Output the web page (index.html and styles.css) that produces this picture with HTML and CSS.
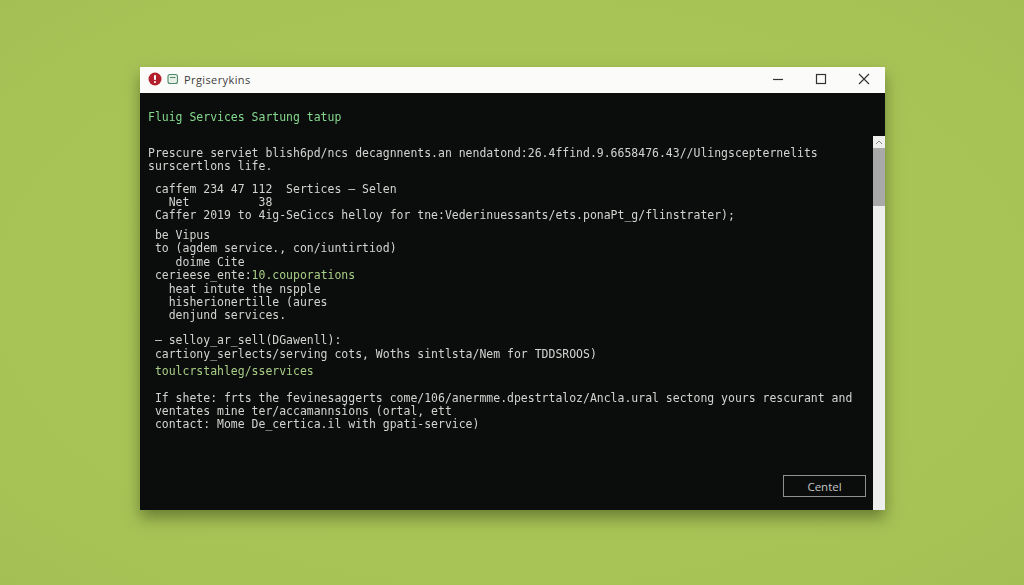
FILE: index.html
```html
<!DOCTYPE html>
<html lang="en">
<head>
<meta charset="utf-8">
<title>Prgiserykins</title>
<link rel="stylesheet" href="styles.css">
</head>
<body>
<main class="window">
  <header class="titlebar">
    <div class="title-group">
      <svg class="app-alert" viewBox="0 0 14 14" width="14" height="14" aria-hidden="true">
        <circle cx="7" cy="7" r="6.5" fill="#b3202c"/>
        <rect x="6" y="3" width="2" height="5" rx=".8" fill="#fff"/>
        <circle cx="7" cy="10" r="1.1" fill="#fff"/>
      </svg>
      <svg class="app-icon" viewBox="0 0 12 12" width="12" height="12" aria-hidden="true">
        <rect x="1" y="1.5" width="9.5" height="9" rx="2" fill="#e6f0e6" stroke="#4f8a68" stroke-width="1.1"/>
        <path d="M3 4.5h5.5" stroke="#4f8a68" stroke-width="1"/>
      </svg>
      <span class="title-text">Prgiserykins</span>
    </div>
    <div class="controls">
      <svg viewBox="0 0 12 12" width="12" height="12" aria-hidden="true"><path d="M1 6.5h10" stroke="#333" stroke-width="1.2"/></svg>
      <svg viewBox="0 0 12 12" width="12" height="12" aria-hidden="true"><rect x="1.5" y="1.5" width="9" height="9" fill="none" stroke="#333" stroke-width="1.2"/></svg>
      <svg viewBox="0 0 12 12" width="12" height="12" aria-hidden="true"><path d="M1 1l10 10M11 1L1 11" stroke="#333" stroke-width="1.2"/></svg>
    </div>
  </header>
  <div class="client">
    <section class="terminal">
      <div class="lines heading">Fluig Services Sartung tatup</div>
      <div class="lines block-a">Prescure serviet blish6pd/ncs decagnnents.an nendatond:26.4ffind.9.6658476.43//Ulingscepternelits
surscertlons life.</div>
      <div class="lines block-b"> caffem 234 47 112  Sertices – Selen
   Net          38
 Caffer 2019 to 4ig-SeCiccs helloy for tne:Vederinuessants/ets.ponaPt_g/flinstrater);</div>
      <div class="lines block-c"> be Vipus
 to (agdem service., con/iuntirtiod)
    doime Cite
 cerieese_ente:<span class="accent">10.couporations</span>
   heat intute the nspple
   hisherionertille (aures
   denjund services.</div>
      <div class="lines block-d"> – selloy_ar_sell(DGawenll):
 cartiony_serlects/serving cots, Woths sintlsta/Nem for TDDSROOS)</div>
      <div class="lines block-e accent"> toulcrstahleg/sservices</div>
      <div class="lines block-f"> If shete: frts the fevinesaggerts come/106/anermme.dpestrtaloz/Ancla.ural sectong yours rescurant and
 ventates mine ter/accamannsions (ortal, ett
 contact: Mome De_certica.il with gpati-service)</div>
      <div class="actions"><button class="cancel" type="button">Centel</button></div>
    </section>
    <aside class="scrollbar">
      <div class="arrow"><svg viewBox="0 0 8 5" width="8" height="5" aria-hidden="true"><path d="M1 4l3-3 3 3" fill="none" stroke="#8a8a8a" stroke-width="1"/></svg></div>
      <div class="thumb"></div>
    </aside>
  </div>
</main>
</body>
</html>
```
FILE: styles.css
```css
* { box-sizing: border-box; }
html, body { height: 100%; }
body {
  margin: 0;
  padding: 67px 139px 75px 140px;
  overflow: hidden;
  background: radial-gradient(ellipse at 50% 50%, #a8c556 0%, #a8c457 70%, #a4c054 100%);
}
.window {
  height: 443px;
  display: flex;
  flex-direction: column;
  box-shadow: 0 8px 14px rgba(50, 60, 20, .5);
}
.titlebar {
  height: 26px;
  flex: none;
  display: flex;
  align-items: center;
  justify-content: space-between;
  padding-bottom: 2px;
  background: #fbfbf9;
}
.title-group { display: flex; align-items: center; padding-left: 8px; }
.app-icon { margin-left: 5px; }
.title-text {
  margin-left: 5px;
  font: 11px "Open Sans", "Liberation Sans", sans-serif;
  letter-spacing: .4px;
  color: #3c3c3c;
}
.controls { display: flex; gap: 31px; padding-right: 15px; }
.client { flex: 1; display: flex; min-height: 0; background: #0b0c0c; }
.terminal {
  flex: 1;
  display: flex;
  flex-direction: column;
  padding: 18px 7px 13px 8px;
  min-width: 0;
}
.lines {
  font: 11.48px/13px "DejaVu Sans Mono", monospace;
  color: #d2d4d0;
  white-space: pre;
  filter: blur(.35px);
}
.heading { color: #84d98e; }
.accent { color: #a9cf86; }
.block-a { margin-top: 23px; }
.block-b { margin-top: 10px; }
.block-c { margin-top: 7px; line-height: 13.4px; }
.block-d { margin-top: 10px; line-height: 14px; }
.block-e { margin-top: 4px; }
.block-f { margin-top: 14px; }
.actions { margin-top: auto; display: flex; justify-content: flex-end; }
.cancel {
  width: 83px;
  height: 22px;
  padding: 0;
  background: transparent;
  border: 1px solid #8f9190;
  color: #c4c6c4;
  font: 11.5px "Open Sans", "Liberation Sans", sans-serif;
}
.scrollbar {
  width: 12px;
  flex: none;
  margin-top: 43px;
  background: #eeeeec;
  display: flex;
  flex-direction: column;
}
.arrow { height: 12px; display: flex; align-items: center; justify-content: center; }
.thumb { height: 58px; background: #a8a9a8; }
```
